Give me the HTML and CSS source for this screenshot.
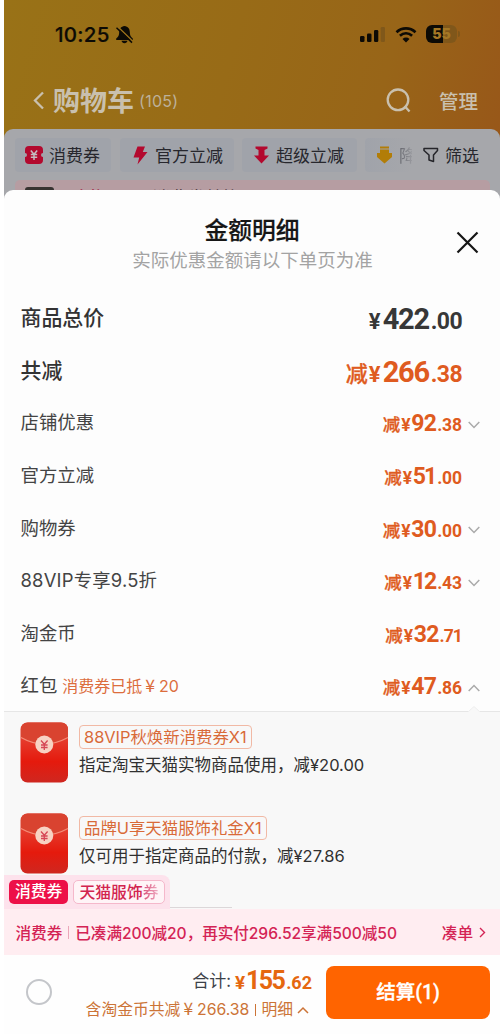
FILE: index.html
```html
<!DOCTYPE html>
<html lang="zh-CN">
<head>
<meta charset="utf-8">
<meta name="viewport" content="width=device-width">
<title>购物车</title>
<link rel="stylesheet" href="styles.css">
</head>
<body>
<div class="phone">
  <header class="top">
    <div class="status">
      <span class="time">10:25</span>
      <svg class="bell" width="19" height="19" viewBox="0 0 19 19"><path d="M9.500 1C6 1.300 4.200 4 4.200 7c0 3.700-1 5-3 6.500v1.500h16.600v-1.500c-2-1.500-3-2.800-3-6.500 0-3-1.800-5.700-5.300-6zM6.500 15.800h6c-.3 1.600-1.500 2.500-3 2.500s-2.700-.9-3-2.500z" fill="#0c0a05"/><path d="M2.800 1.800l15 14.500" stroke="#99701a" stroke-width="1.500"/><path d="M1.500 2.700L17 17.600" stroke="#0c0a05" stroke-width="1.500"/></svg>
      <svg class="signal" width="26" height="18" viewBox="0 0 26 18"><g fill="#0c0a05"><rect x="0" y="11" width="4.500" height="6" rx="1.300"/><rect x="7" y="8.500" width="4.500" height="8.500" rx="1.300"/><rect x="14" y="5" width="4.300" height="12" rx="1.300"/></g><rect x="20.700" y="2" width="4.300" height="15" rx="1.300" fill="#80581a"/></svg>
      <svg class="wifi" width="22" height="17" viewBox="0 0 22 17"><path d="M1.500 6.200c5.500-5 13.500-5 19 0M4.900 9.800c3.700-3.300 8.500-3.300 12.200 0" fill="none" stroke="#0c0a05" stroke-width="2.700"/><path d="M11 16.500l-3.500-3.600c2-1.800 5-1.800 7 0z" fill="#0c0a05"/></svg>
      <div class="battery"><b>55</b></div><i class="cap"></i>
    </div>
    <div class="nav">
      <svg class="back" width="12" height="19" viewBox="0 0 12 19"><path d="M10 1.500L2 9.500l8 8" fill="none" stroke="#c9c0ae" stroke-width="2.300"/></svg>
      <h1>购物车</h1><span class="count">(105)</span>
      <svg class="search" width="25" height="25" viewBox="0 0 25 25" fill="none" stroke="#c9c0ae" stroke-width="2.300"><circle cx="12" cy="11.800" r="10.300"/><path d="M18.500 18l5 5.500"/></svg>
      <span class="manage">管理</span>
    </div>
  </header>
  <section class="filters">
    <div class="chips">
      <div class="chip c1"><svg width="20" height="18" viewBox="0 0 20 18"><path d="M5 0h10q4 0 4 4v3a2 2 0 0 0 0 4v3q0 4-4 4H5q-4 0-4-4v-3a2 2 0 0 0 0-4V4q0-4 4-4z" fill="#b3092e"/><path d="M6.800 4.500L10 8.300l3.200-3.800M10 8v6M6.800 8.500h6.400M6.800 11.200h6.400" stroke="#c4bcc0" stroke-width="1.500" fill="none"/></svg><span>消费券</span></div>
      <div class="chip c2"><svg width="15" height="19" viewBox="0 0 15 19"><path d="M4.500.5h7.500L9.800 6H14.500L4.500 18.500l1.700-7H.5z" fill="#b3092e"/></svg><span>官方立减</span></div>
      <div class="chip c3"><svg width="15" height="18" viewBox="0 0 15 18"><path d="M1.500.5h12v2l-3 1.500v5.500H15L7.500 17.500 0 9.500h4.500V4l-3-1.500z" fill="#b3092e"/></svg><span>超级立减</span></div>
      <div class="chip c4"><svg width="15" height="18" viewBox="0 0 15 18"><path d="M3 .5h9v2H3zM3 3.500h9V7h3v4l-7.500 6.500L0 11V7h3z" fill="#b27d08"/></svg><span class="fade">降</span></div>
      <div class="sift"><svg width="16" height="16" viewBox="0 0 16 16"><path d="M1 1.500h13.500v2L10.500 8v6.500L6 13V8L1 3.500z" fill="none" stroke="#25252a" stroke-width="1.500" stroke-linejoin="round"/></svg><span>筛选</span></div>
    </div>
    <div class="promo"><i></i><b>购物</b><b class="b2">天</b><span>消费券替换用</span></div>
  </section>
  <main class="sheet">
    <div class="heading">
      <h2>金额明细</h2>
      <p>实际优惠金额请以下单页为准</p>
      <svg class="close" width="23" height="23" viewBox="0 0 23 23"><path d="M1.500 1.500l20 20M21.500 1.500l-20 20" stroke="#151515" stroke-width="2.200"/></svg>
    </div>
    <div class="rows">
      <div class="row strong total"><label>商品总价</label><div class="amt"><i>¥</i><b>422</b><em>.00</em></div></div>
      <div class="row strong"><label>共减</label><div class="amt"><span>减</span><i>¥</i><b>266</b><em>.38</em></div></div>
      <div class="row"><label>店铺优惠</label><div class="amt"><span>减</span><i>¥</i><b>92</b><em>.38</em></div><svg class="chev" width="12" height="8" viewBox="0 0 12 8"><path d="M.7 1L6 6.500 11.300 1"/></svg></div>
      <div class="row"><label>官方立减</label><div class="amt"><span>减</span><i>¥</i><b class="one">51</b><em>.00</em></div></div>
      <div class="row"><label>购物券</label><div class="amt"><span>减</span><i>¥</i><b>30</b><em>.00</em></div><svg class="chev" width="12" height="8" viewBox="0 0 12 8"><path d="M.7 1L6 6.500 11.300 1"/></svg></div>
      <div class="row"><label class="wide">88VIP专享9.5折</label><div class="amt"><span>减</span><i>¥</i><b class="one">12</b><em>.43</em></div><svg class="chev" width="12" height="8" viewBox="0 0 12 8"><path d="M.7 1L6 6.500 11.300 1"/></svg></div>
      <div class="row"><label>淘金币</label><div class="amt"><span>减</span><i>¥</i><b>32</b><em class="narrow">.71</em></div></div>
      <div class="row"><label>红包</label><small>消费券已抵<span class="yen">¥</span>20</small><div class="amt"><span>减</span><i>¥</i><b>47</b><em>.86</em></div><svg class="chev" width="12" height="8" viewBox="0 0 12 8"><path d="M.7 7L6 1.500 11.300 7"/></svg></div>
    </div>
    <section class="packets">
      <svg class="notch" width="12" height="6" viewBox="0 0 12 6"><path d="M0 6L6 .5 12 6" fill="#f8f8f8" stroke="#eee"/></svg>
      <div class="packet">
        <svg width="49" height="61" viewBox="0 0 49 61"><defs><linearGradient id="red" x1="0" y1="0" x2="0" y2="1"><stop offset="0" stop-color="#df4634"/><stop offset=".3" stop-color="#e53a2b"/><stop offset=".65" stop-color="#e51a0d"/><stop offset="1" stop-color="#cf2720"/></linearGradient></defs><rect x=".5" y=".5" width="47.500" height="60" rx="7" fill="url(#red)"/><path d="M1 15q23 14 47 0V8q0-7.500-7-7.500H8Q1 .500 1 8z" fill="#d94330"/><path d="M1 15.500q23 13 47 0" fill="none" stroke="#f48c78" stroke-width="1.300"/><circle cx="24.300" cy="22.500" r="9" fill="#f8d2c3"/><path d="M21 18.500l3.300 3.700 3.300-3.700M24.300 22v6M21 23h6.600M21 25.500h6.600" fill="none" stroke="#d54655" stroke-width="1.300"/></svg>
        <div class="info"><span class="badge w1">88VIP秋焕新消费券X1</span><p>指定淘宝天猫实物商品使用，减¥20.00</p></div>
      </div>
      <div class="packet">
        <svg width="49" height="61" viewBox="0 0 49 61"><rect x=".5" y=".5" width="47.500" height="60" rx="7" fill="url(#red)"/><path d="M1 15q23 14 47 0V8q0-7.500-7-7.500H8Q1 .500 1 8z" fill="#d94330"/><path d="M1 15.500q23 13 47 0" fill="none" stroke="#f48c78" stroke-width="1.300"/><circle cx="24.300" cy="22.500" r="9" fill="#f8d2c3"/><path d="M21 18.500l3.300 3.700 3.300-3.700M24.300 22v6M21 23h6.600M21 25.500h6.600" fill="none" stroke="#d54655" stroke-width="1.300"/></svg>
        <div class="info"><span class="badge w2">品牌U享天猫服饰礼金X1</span><p>仅可用于指定商品的付款，减¥27.86</p></div>
      </div>
      <div class="tabs"><span class="on">消费券</span><span class="off">天猫服饰<span class="last">券</span></span></div>
      <div class="edge"></div>
    </section>
    <div class="notice"><span class="tag">消费券</span><i></i><span class="msg">已凑满200减20，再实付296.52享满500减50</span><span class="go">凑单</span><svg width="7" height="11" viewBox="0 0 7 11"><path d="M1 1l4.500 4.500L1 10" fill="none" stroke="#d42455" stroke-width="1.400"/></svg></div>
    <footer class="checkout">
      <div class="radio"></div>
      <div class="sum">
        <div class="line1"><span>合计:</span><i>¥</i><b>155</b><em>.62</em></div>
        <div class="line2"><span>含淘金币共减<span class="yen">¥</span>266.38</span><u></u><span class="detail">明细</span><svg width="12" height="8" viewBox="0 0 12 8"><path d="M1 7l5-5 5 5" fill="none" stroke="#cc7437" stroke-width="1.500"/></svg></div>
      </div>
      <button>结算(1)</button>
    </footer>
  </main>
</div>
</body>
</html>
```
FILE: styles.css
```css
* { box-sizing: border-box; }
body { margin: 0; background: #fff; font-family: Inter, "Noto Sans CJK SC", sans-serif; }
h1, h2, p { margin: 0; }
i, em { font-style: normal; }
svg { display: block; flex: none; }
.phone { width: 496px; height: 1034px; margin-left: 4px; overflow: hidden; white-space: nowrap; background: linear-gradient(105deg, #997217, #986b17 45%, #986518 75%, #985719) 0 0 / 100% 150px no-repeat; }

.top { height: 129px; }
.status { height: 68px; display: flex; align-items: center; padding: 0 0 0 51px; color: #0c0a05; }
.time { font-size: 20.500px; font-weight: 500; width: 58px; letter-spacing: .3px; -webkit-text-stroke: .2px; }
.bell { margin-left: 2px; }
.signal { margin-left: 226px; }
.wifi { margin-left: 9px; }
.battery { flex: none; width: 31px; height: 18px; margin-left: 9px; border-radius: 6px; background: linear-gradient(90deg, #0c0a05 0 55%, #80571a 55%); color: #a47725; font: 600 14px/18px Inter, sans-serif; text-align: center; }
.cap { width: 2px; height: 6px; margin-left: 1px; background: #80571a; border-radius: 0 2px 2px 0; }
.nav { height: 61px; display: flex; align-items: center; padding: 4px 0 0 29px; color: #c9c0ae; }
.nav h1 { font-size: 27px; line-height: 36px; font-weight: 700; margin-left: 8px; width: 82px; padding-top: 2px; }
.count { font-size: 16px; margin-left: 4px; width: 42px; letter-spacing: .3px; color: #bdb19a; }
.search { margin-left: 205px; }
.manage { font-size: 19.500px; font-weight: 500; margin-left: 28px; }

.filters { height: 61px; padding: 9px 10px 0 11px; background: #a6a7ab; border-radius: 9px 9px 0 0; box-shadow: 0 10px 0 #a6a7ab; }
.chips { display: flex; height: 34px; gap: 9px; }
.chip, .sift { display: flex; align-items: center; font-size: 17px; line-height: 24px; color: #27272d; }
.chip span, .sift span { margin-top: 1px; }
.chip { background: #a0a3aa; border-radius: 4px; }
.c1 { width: 96px; padding-left: 9px; gap: 5px; }
.c2 { width: 114px; padding-left: 13px; gap: 7px; }
.c3 { width: 115px; padding-left: 12px; gap: 7px; margin-left: -1px; }
.c4 { width: 47px; padding-left: 12px; gap: 7px; margin-left: -1px; background: linear-gradient(90deg, #a0a3aa, #a6a7ab); }
.fade { width: 13px; flex: none; overflow: hidden; background: linear-gradient(90deg, #62636a, #9a9ba0); -webkit-background-clip: text; background-clip: text; color: transparent; }
.sift { gap: 6px; margin-left: 2px; }
.promo { height: 30px; margin-top: 8px; border-radius: 5px; background: #b69da2; display: flex; align-items: flex-start; padding: 7px 0 0 10px; font-size: 17.500px; line-height: 22px; color: #4a373d; }
.promo i { width: 29px; height: 16px; background: #373331; border-radius: 3px; }
.promo b { color: #a0103a; margin-left: 17px; font-weight: 500; }
.promo .b2 { margin-left: 29px; }

.sheet { height: 844px; border-radius: 9px 9px 0 0; background: #fdfdfd; position: relative; display: flex; flex-direction: column; }
.heading { height: 101px; padding-top: 24px; text-align: center; position: relative; }
.heading h2 { font-size: 23.800px; line-height: 33px; font-weight: 500; color: #161616; -webkit-text-stroke: .2px; }
.heading p { font-size: 18.500px; line-height: 26px; padding-left: 1px; color: #a3a3a3; }
.close { position: absolute; left: 452px; top: 41px; }
.rows { height: 420px; display: grid; grid-template-rows: repeat(8, 52.600px); }
.row { display: flex; align-items: center; padding: 0 38px 0 16.500px; position: relative; color: #444; }
.row label { font-size: 18.400px; margin-top: -2px; }
.row .wide { letter-spacing: .2px; }
.strong label { font-size: 20.900px; font-weight: 500; color: #333; margin-top: -2px; }
.row small { font-size: 16px; color: #dc6d3d; margin-left: 5px; }
.yen { font-family: "Noto Sans CJK SC", sans-serif; font-size: 1.1em; line-height: 1; margin: 0 4px 0 3px; }
.amt { margin-left: auto; display: flex; align-items: baseline; font-family: Roboto, sans-serif; color: #df5b20; padding-top: 5px; line-height: 28px; }
.amt span { font: 500 17.500px/28px "Noto Sans CJK SC", sans-serif; -webkit-text-stroke: .3px; margin-right: 1px; }
.amt i { font-size: 17.500px; font-weight: 700; margin-right: 1px; width: 9px; }
.amt b { font-size: 23px; font-weight: 700; letter-spacing: -.8px; }
.amt .one { letter-spacing: -2px; margin-right: 1px; }
.amt em { font-size: 17.500px; font-weight: 700; margin-left: 1px; letter-spacing: -.1px; }
.amt .narrow { letter-spacing: -.9px; }
.strong .amt { padding-top: 7px; }
.strong .amt span { font-size: 22px; }
.strong .amt i { font-size: 22px; width: 13px; }
.strong .amt b { font-size: 29px; letter-spacing: -1.300px; }
.strong .amt em { font-size: 23px; letter-spacing: -.6px; margin-left: 2px; }
.total .amt { color: #373737; }
.chev { position: absolute; right: 20px; top: 25px; fill: none; stroke: #aaa; stroke-width: 1.500; }

.packets { height: 198px; padding: 10px 0 0 16px; border-top: 1px solid #e6e6e6; background: #f8f8f8; position: relative; }
.notch { position: absolute; left: 464px; top: -6px; }
.packet { height: 91px; display: flex; gap: 10px; }
.info { padding-top: 3px; }
.badge { display: block; height: 24px; border: 1px solid #f1b9a5; border-radius: 4px; padding-left: 4px; font-size: 16.400px; line-height: 23px; color: #d96a38; }
.w1 { width: 173px; }
.w2 { width: 188px; }
.info p { font-size: 16.500px; line-height: 24px; margin-top: 4px; color: #303030; }
.tabs { position: absolute; left: 0; bottom: 0; width: 166px; height: 34px; padding: 5px 0 0 5px; display: flex; gap: 5px; background: #fde2ec; border-radius: 0 8px 0 0; }
.edge { position: absolute; left: 166px; bottom: 1px; width: 62px; height: 1px; background: #dcd7d9; }
.on, .off { height: 24px; border-radius: 5px; font-size: 15.800px; line-height: 24px; font-weight: 500; }
.on { width: 59px; background: #ed1048; color: #fff; padding-left: 6px; }
.off { width: 92px; border: 1px solid #f5b8cb; background: #fff4f7; color: #d2244f; padding-left: 5.500px; line-height: 23px; }
.last { background: linear-gradient(90deg, #d95078, #f0b3c8); -webkit-background-clip: text; background-clip: text; color: transparent; }
.notice { height: 46px; background: #ffedf1; display: flex; align-items: center; padding: 0 0 0 11.500px; font-size: 15.600px; font-weight: 500; color: #d42455; }
.notice i { width: 1px; height: 13px; background: #eba7b9; margin: 0 6px; }
.msg { letter-spacing: -.05px; }
.notice .go { margin-left: auto; }
.notice svg { margin: 0 14px 0 6px; }
.checkout { height: 79px; display: flex; padding: 11px 10px 0 22px; background: #fefefe; }
.radio { width: 26px; height: 26px; border: 2px solid #c4c6ca; border-radius: 50%; margin-top: 13px; }
.sum { width: 260px; margin-right: 14px; }
.line1 { display: flex; justify-content: flex-end; align-items: baseline; height: 31px; line-height: 30px; font-family: Roboto, sans-serif; color: #e5670f; }
.line1 span { font: 17px/26px "Noto Sans CJK SC", sans-serif; color: #3c4149; margin-right: 4px; position: relative; top: -2px; }
.line1 i { font-size: 19px; font-weight: 700; width: 11px; }
.line1 b { font-size: 25px; letter-spacing: -1.600px; }
.line1 em { font-size: 18px; font-weight: 700; margin-left: 2px; }
.line2 { display: flex; align-items: center; justify-content: flex-end; font-size: 15.800px; line-height: 25px; color: #cc7437; padding-right: 3px; }
.line2 u { width: 1px; height: 12px; background: #cc7437; margin: 0 5px 0 6px; }
.line2 svg { margin-left: 4px; }
.checkout button { width: 164px; height: 53px; border: 0; border-radius: 8px; background: #ff6400; color: #fff; font: 500 19.500px/54px Roboto, "Noto Sans CJK SC", sans-serif; -webkit-text-stroke: .3px; padding: 0; }
```
